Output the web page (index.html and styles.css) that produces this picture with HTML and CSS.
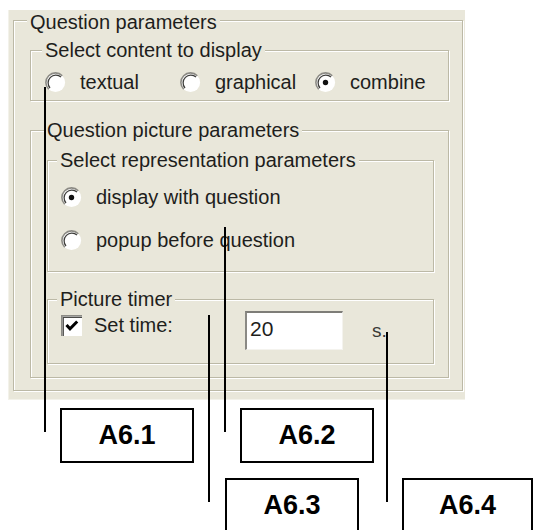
FILE: index.html
```html
<!DOCTYPE html>
<html>
<head>
<meta charset="utf-8">
<link rel="stylesheet" href="styles.css">
</head>
<body>
<div class="panel">
  <fieldset class="grp grp-outer">
    <legend class="lg lg-outer">Question parameters</legend>
    <fieldset class="grp grp-content">
      <legend class="lg">Select content to display</legend>
      <div class="opts">
        <label class="opt">
          <svg class="radio" viewBox="0 0 21 21" width="21" height="21"><circle cx="10.5" cy="10.5" r="9.6" fill="#fff"/><path d="M3.7 17.3 A9.6 9.6 0 0 1 17.3 3.7" fill="none" stroke="#8c8b85" stroke-width="1.6"/><path d="M5 16 A7.8 7.8 0 0 1 16 5" fill="none" stroke="#3e3e3b" stroke-width="1.3"/></svg>
          <span>textual</span>
        </label>
        <label class="opt">
          <svg class="radio" viewBox="0 0 21 21" width="21" height="21"><circle cx="10.5" cy="10.5" r="9.6" fill="#fff"/><path d="M3.7 17.3 A9.6 9.6 0 0 1 17.3 3.7" fill="none" stroke="#8c8b85" stroke-width="1.6"/><path d="M5 16 A7.8 7.8 0 0 1 16 5" fill="none" stroke="#3e3e3b" stroke-width="1.3"/></svg>
          <span>graphical</span>
        </label>
        <label class="opt">
          <svg class="radio" viewBox="0 0 21 21" width="21" height="21"><circle cx="10.5" cy="10.5" r="9.6" fill="#fff"/><path d="M3.7 17.3 A9.6 9.6 0 0 1 17.3 3.7" fill="none" stroke="#8c8b85" stroke-width="1.6"/><path d="M5 16 A7.8 7.8 0 0 1 16 5" fill="none" stroke="#3e3e3b" stroke-width="1.3"/><circle cx="10.5" cy="10.5" r="2.7" fill="#111"/></svg>
          <span>combine</span>
        </label>
      </div>
    </fieldset>
    <fieldset class="grp grp-picture">
      <legend class="lg">Question picture parameters</legend>
      <fieldset class="grp grp-repr">
        <legend class="lg">Select representation parameters</legend>
        <div class="rows">
          <label class="opt">
            <svg class="radio" viewBox="0 0 21 21" width="21" height="21"><circle cx="10.5" cy="10.5" r="9.6" fill="#fff"/><path d="M3.7 17.3 A9.6 9.6 0 0 1 17.3 3.7" fill="none" stroke="#8c8b85" stroke-width="1.6"/><path d="M5 16 A7.8 7.8 0 0 1 16 5" fill="none" stroke="#3e3e3b" stroke-width="1.3"/><circle cx="10.5" cy="10.5" r="2.7" fill="#111"/></svg>
            <span>display with question</span>
          </label>
          <label class="opt">
            <svg class="radio" viewBox="0 0 21 21" width="21" height="21"><circle cx="10.5" cy="10.5" r="9.6" fill="#fff"/><path d="M3.7 17.3 A9.6 9.6 0 0 1 17.3 3.7" fill="none" stroke="#8c8b85" stroke-width="1.6"/><path d="M5 16 A7.8 7.8 0 0 1 16 5" fill="none" stroke="#3e3e3b" stroke-width="1.3"/></svg>
            <span>popup before question</span>
          </label>
        </div>
      </fieldset>
      <fieldset class="grp grp-timer">
        <legend class="lg">Picture timer</legend>
        <div class="timer-row">
          <label class="chk">
            <svg class="box" viewBox="0 0 21 21" width="21" height="21"><rect width="21" height="21" fill="#fff"/><path d="M0.8 21 V0.8 H21" fill="none" stroke="#8c8b85" stroke-width="1.6"/><path d="M2.3 21 V2.3 H21" fill="none" stroke="#4a4a47" stroke-width="1.2"/><path d="M5.5 10 L9 13.8 L16.2 6.5" fill="none" stroke="#000" stroke-width="3"/></svg>
            <span>Set time:</span>
          </label>
          <div class="edit">20</div>
          <span class="unit">s.</span>
        </div>
      </fieldset>
    </fieldset>
  </fieldset>
</div>

<div class="callouts">
  <div class="lead lead-1"></div>
  <div class="lead lead-2"></div>
  <div class="lead lead-3"></div>
  <div class="lead lead-4"></div>
  <div class="tag tag-1">A6.1</div>
  <div class="tag tag-2">A6.2</div>
  <div class="tag tag-3">A6.3</div>
  <div class="tag tag-4">A6.4</div>
</div>
</body>
</html>
```
FILE: styles.css
```css
html, body {
  margin: 0;
  padding: 0;
  overflow: hidden;
  background: #ffffff;
}

body {
  font-family: "Liberation Sans", Arial, sans-serif;
  font-size: 20px;
  color: #1e1e1c;
}

.panel {
  display: flow-root;
  margin: 10px 0 0 8px;
  width: 457px;
  height: 390px;
  box-sizing: border-box;
  background: #e9e7da;
  border-left: 1px solid #f3f2ea;
  border-bottom: 1px solid #f3f2ea;
}

.grp {
  margin: 0;
  min-width: 0;
  border: 1px solid #bcb9a6;
  box-shadow: inset 1px 1px 0 #ffffff, 1px 1px 0 #ffffff;
}

.lg {
  padding: 0 3px;
  margin-left: -3px;
  line-height: 20px;
  background: #e9e7da;
  white-space: nowrap;
}

.lg-outer {
  line-height: 16px;
  padding-top: 4px;
}

.grp-outer {
  margin: 0 2px 0 4px;
  padding: 10px 13px 12px 16px;
}

.grp-content {
  padding: 10px 12px 6px 14px;
  margin-bottom: 19px;
}

.opts {
  display: grid;
  grid-template-columns: 135px 135px auto;
}

.opt {
  display: flex;
  align-items: center;
  gap: 14px;
  line-height: 24px;
  white-space: nowrap;
}

.radio, .box {
  flex: none;
  display: block;
}

.grp-picture {
  padding: 10px 14px 13px 16px;
}

.grp-repr {
  padding: 15px 12px 19px 12px;
  margin-bottom: 17px;
}

.rows {
  display: flex;
  flex-direction: column;
  gap: 19px;
  padding-left: 1px;
}

.grp-timer {
  padding: 2px 12px 13px 12px;
}

.timer-row {
  display: flex;
  align-items: flex-start;
}

.chk {
  display: flex;
  align-items: center;
  gap: 12px;
  width: 184px;
  margin-top: 2px;
  padding-left: 1px;
  line-height: 24px;
}

.edit {
  width: 98px;
  height: 39px;
  box-sizing: border-box;
  background: #ffffff;
  border-top: 2px solid #7e7d78;
  border-left: 2px solid #8a8984;
  border-right: 1px solid #f4f3ee;
  border-bottom: 1px solid #f4f3ee;
  padding: 4px 0 0 3px;
  line-height: 24px;
  font-size: 21px;
}

.unit {
  margin: 8px 0 0 29px;
  line-height: 24px;
  font-size: 19px;
  color: #3a3a36;
}

.callouts {
  position: absolute;
  left: 0;
  top: 0;
}

.lead {
  position: absolute;
  width: 2px;
  background: #000000;
}

.lead-1 { left: 44px; top: 87px; height: 345px; }
.lead-2 { left: 224px; top: 227px; height: 205px; }
.lead-3 { left: 208px; top: 315px; height: 187px; }
.lead-4 { left: 386px; top: 332px; height: 170px; }

.tag {
  position: absolute;
  width: 134px;
  height: 55px;
  box-sizing: border-box;
  border: 2px solid #000000;
  background: #ffffff;
  display: flex;
  align-items: center;
  justify-content: center;
  font-family: "Liberation Sans", Arial, sans-serif;
  font-weight: bold;
  font-size: 27px;
  color: #000000;
}

.tag-1 { left: 60px; top: 408px; }
.tag-2 { left: 240px; top: 408px; }
.tag-3 { left: 225px; top: 478px; }
.tag-4 { left: 402px; top: 478px; width: 131px; }
```
